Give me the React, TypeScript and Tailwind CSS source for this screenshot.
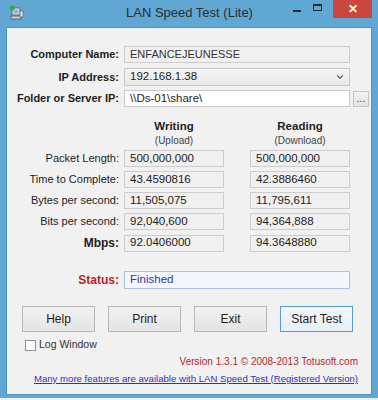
import { ChevronDown } from 'lucide-react';

const ui = { fontFamily: '"Liberation Sans", Arial, sans-serif' };

const results = [
  { label: 'Packet Length:', write: '500,000,000', read: '500,000,000' },
  { label: 'Time to Complete:', write: '43.4590816', read: '42.3886460' },
  { label: 'Bytes per second:', write: '11,505,075', read: '11,795,611' },
  { label: 'Bits per second:', write: '92,040,600', read: '94,364,888' },
  { label: 'Mbps:', write: '92.0406000', read: '94.3648880', bold: true },
];

function Field({ children, className = '' }: { children: React.ReactNode; className?: string }) {
  return (
    <div className={`h-[17px] flex items-center px-[5px] border border-[#cdcdcd] bg-[#f0f0f0] text-[11.5px] text-[#222] whitespace-nowrap ${className}`}>
      {children}
    </div>
  );
}

function WinButton({ label, primary }: { label: string; primary?: boolean }) {
  return (
    <button
      className={`w-[73px] h-[26px] text-[12px] text-[#222] border ${
        primary
          ? 'border-[#5b9bd5] bg-gradient-to-b from-[#f4f8fc] to-[#e6eff8]'
          : 'border-[#b8b8b8] bg-gradient-to-b from-[#f2f2f2] to-[#e4e4e4]'
      }`}
    >
      {label}
    </button>
  );
}

function AppIcon() {
  return (
    <svg width="16" height="16" viewBox="0 0 16 16">
      <rect x="4" y="3" width="8" height="7" fill="#dfe9f0" stroke="#5a6b78" />
      <rect x="5.5" y="4.5" width="5" height="4" fill="#8fb5cf" />
      <rect x="3" y="11" width="10" height="3" fill="#c9d3da" stroke="#5a6b78" />
      <circle cx="4" cy="3" r="2.5" fill="#3fa34d" />
      <rect x="12" y="6" width="3" height="6" fill="#e4e9ed" stroke="#5a6b78" strokeWidth="0.8" />
    </svg>
  );
}

export default function App() {
  return (
    <div className="w-[378px] h-[400px] bg-[#60a7d4] overflow-hidden flex flex-col" style={ui}>
      {/* title bar */}
      <div className="h-[27px] flex items-start shrink-0">
        <div className="w-[30px] pl-[8px] pt-[5px]">
          <AppIcon />
        </div>
        <div className="flex-1 pt-[3px] pl-[96px] text-[13px] text-[#2c2c2c] whitespace-nowrap">LAN Speed Test (Lite)</div>
        <div className="flex items-start">
          <div className="w-[20px] h-[18px] flex items-center justify-center">
            <div className="w-[8px] h-[2px] bg-[#1e2a33] mt-[4px]" />
          </div>
          <div className="w-[20px] h-[18px] flex items-center justify-center mr-[6px]">
            <div className="w-[9px] h-[7px] border border-[#1e2a33] border-t-2 -mt-[4px]" />
          </div>
          <div className="w-[39px] h-[18px] bg-[#c9473f] flex items-center justify-center text-white text-[12px] font-bold mr-[6px]">
            ✕
          </div>
        </div>
      </div>

      {/* client area */}
      <div className="mx-[6px] h-[368px] bg-[#f1f1f1] border border-[#4f93c2] pt-[18px] text-[#1e1e1e] shrink-0">
        <div className="flex items-center h-[17px]">
          <div className="w-[112px] text-right text-[11px] font-bold whitespace-nowrap">Computer Name:</div>
          <Field className="ml-[5px] w-[226px] text-[11px] text-[#333]">ENFANCEJEUNESSE</Field>
        </div>
        <div className="flex items-center mt-[5px]">
          <div className="w-[112px] text-right text-[11px] font-bold whitespace-nowrap">IP Address:</div>
          <div className="ml-[5px] w-[226px] h-[18px] border border-[#c8c8c8] bg-gradient-to-b from-[#f4f4f4] to-[#e9e9e9] flex items-center pl-[5px] pr-[4px] text-[11.5px]">
            <span className="flex-1">192.168.1.38</span>
            <ChevronDown size={10} strokeWidth={3} className="text-[#666]" />
          </div>
        </div>
        <div className="flex items-center mt-[4px]">
          <div className="w-[112px] text-right text-[11px] font-bold whitespace-nowrap">Folder or Server IP:</div>
          <div className="ml-[5px] w-[226px] h-[17px] border border-[#c8c8c8] bg-white flex items-center px-[5px] text-[11.5px]">
            \\Ds-01\share\
          </div>
          <div className="ml-[3px] w-[16px] h-[16px] border border-[#c3c3c3] bg-gradient-to-b from-[#f2f2f2] to-[#e3e3e3] text-[10px] leading-[10px] flex items-end justify-center pb-[2px] text-[#333]">
            ...
          </div>
        </div>

        {/* results */}
        <div className="flex mt-[12px]">
          <div className="w-[117px]" />
          <div className="w-[100px] text-center">
            <div className="text-[11.5px] font-bold leading-[15px]">Writing</div>
            <div className="text-[10px] leading-[14px] text-[#444]">(Upload)</div>
          </div>
          <div className="w-[26px]" />
          <div className="w-[100px] text-center">
            <div className="text-[11.5px] font-bold leading-[15px]">Reading</div>
            <div className="text-[10px] leading-[14px] text-[#444]">(Download)</div>
          </div>
        </div>
        <div className="flex flex-col gap-[4px] mt-[2px]">
          {results.map((r) => (
            <div key={r.label} className="flex items-center">
              <div className={`w-[112px] text-right whitespace-nowrap ${r.bold ? 'text-[12px] font-bold' : 'text-[11px]'}`}>{r.label}</div>
              <Field className="ml-[5px] w-[100px]">{r.write}</Field>
              <Field className="ml-[26px] w-[100px]">{r.read}</Field>
            </div>
          ))}
        </div>

        <div className="flex items-center mt-[19px]">
          <div className="w-[112px] text-right text-[12px] font-bold text-[#b8262b]">Status:</div>
          <div className="ml-[5px] w-[226px] h-[18px] border border-[#a6c3e4] bg-[#f4f8fd] flex items-center px-[5px] text-[11.5px] text-[#3434a8]">
            Finished
          </div>
        </div>

        <div className="flex gap-[13px] pl-[15px] mt-[17px]">
          <WinButton label="Help" />
          <WinButton label="Print" />
          <WinButton label="Exit" />
          <WinButton label="Start Test" primary />
        </div>

        <label className="flex items-center h-[14px] gap-[3px] ml-[18px] mt-[6px] text-[10.5px] text-[#333]">
          <span className="w-[11px] h-[11px] border border-[#8e8e8e] bg-white" />
          Log Window
        </label>

        <div className="text-right pr-[13px] mt-[3px] h-[14px] leading-[14px] text-[10px] text-[#b0282d] whitespace-nowrap">
          Version 1.3.1 © 2008-2013 Totusoft.com
        </div>
        <div className="text-right pr-[13px] mt-[3px] h-[14px] leading-[14px] text-[9.6px] text-[#3030c0] underline whitespace-nowrap">
          Many more features are available with LAN Speed Test (Registered Version)
        </div>
      </div>
      <div className="h-[3px] shrink-0" />
      <div className="h-[2px] bg-[#eeeeee] shrink-0" />
    </div>
  );
}
